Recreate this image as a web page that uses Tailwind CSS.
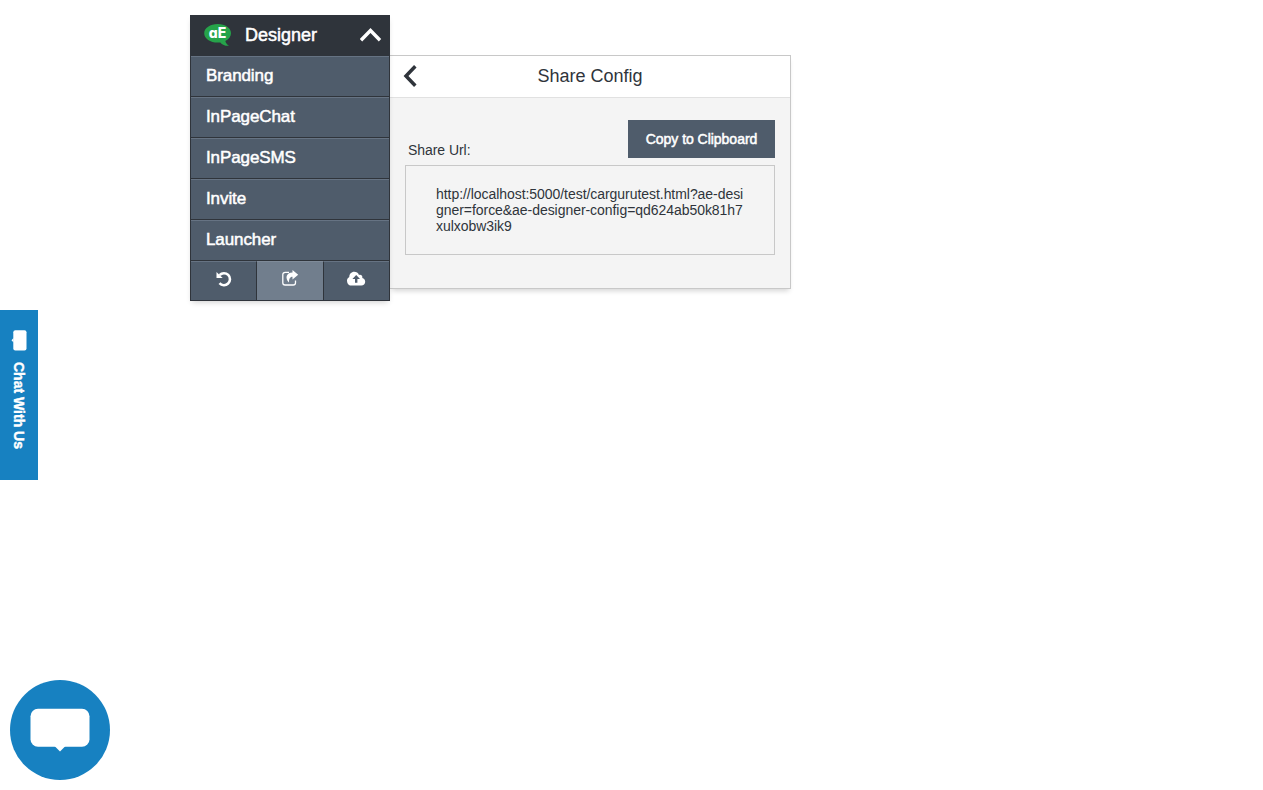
<!DOCTYPE html>
<html lang="en">
<head>
<meta charset="utf-8">
<title>Designer</title>
<script src="https://cdn.jsdelivr.net/npm/@tailwindcss/browser@4"></script>
</head>
<body class="relative h-[790px] overflow-hidden bg-white font-['Liberation_Sans',Arial,sans-serif] text-[#2f343b]">
<div class="flex items-start pl-[190px] pt-[15px]">
  <nav class="relative z-10 w-[200px] shrink-0 text-[17px] tracking-[-0.1px] text-white shadow-[0_3px_6px_-2px_rgba(0,0,0,0.2)] [-webkit-text-stroke:0.5px_white]">
    <header class="flex h-[41px] items-center bg-[#2f343b] pb-[2px] pl-[14px] pr-[8px] text-lg tracking-normal">
      <svg class="h-[24px] w-[28px] font-['Inter'] [-webkit-text-stroke:0] [font-feature-settings:'cv11','ss03']" viewBox="0 0 28 24">
        <path fill="#26a34a" d="M13.7 1C21.2 1 27 5.1 27 10.2C27 13.4 24.8 16.2 21.3 17.9C22 20.3 23.5 21.9 25 22.8C21.7 23.2 18.3 21.7 16.3 19.4L13.7 19.6C6.200 19.600 .200 15.500 .200 10.200C.200 5.100 6.200 1 13.700 1Z"/>
        <text x="4.800" y="15" fill="#fff" font-weight="800" font-size="14" textLength="17.500" lengthAdjust="spacingAndGlyphs">aE</text>
      </svg>
      <span class="ml-[13px] flex-1 leading-5">Designer</span>
      <svg class="h-[14px] w-[22px]" viewBox="0 0 22 14" fill="none" stroke="#fff" stroke-width="3.400"><path d="M1 12.200L10.500 2.500L20 12.200"/></svg>
    </header>
    <div class="border-x border-[#2f343b] bg-[#4f5c6b]">
      <div class="h-[41px] border-b border-t border-b-[#2f343b] border-t-[#667383] pl-[15px] leading-[38px]">Branding</div>
      <div class="h-[41px] border-b border-t border-b-[#2f343b] border-t-[#667383] pl-[15px] leading-[38px]">InPageChat</div>
      <div class="h-[41px] border-b border-t border-b-[#2f343b] border-t-[#667383] pl-[15px] leading-[38px]">InPageSMS</div>
      <div class="h-[41px] border-b border-t border-b-[#2f343b] border-t-[#667383] pl-[15px] leading-[38px]">Invite</div>
      <div class="h-[41px] border-b border-t border-b-[#2f343b] border-t-[#667383] pl-[15px] leading-[38px]">Launcher</div>
      <div class="flex h-[40px] border-b border-[#2f343b]">
        <div class="flex w-[66px] justify-center border-r border-t border-r-[#2f343b] border-t-[#667383] pt-[8px]">
          <svg class="h-[18px] w-[18px]" viewBox="0 0 18 18" fill="none"><path d="M4.600 5.100A6 6 0 1 1 4.500 13.200" stroke="#fff" stroke-width="2.600"/><path d="M1.500 2V8.100H7.700Z" fill="#fff"/></svg>
        </div>
        <div class="flex w-[67px] justify-center border-r border-t border-r-[#2f343b] border-t-[#7f8b99] bg-[#717e8d] pt-[7px]">
          <svg class="h-[18px] w-[18px]" viewBox="0 0 18 18" fill="none"><path d="M8 3.300H4.300A2.500 2.500 0 0 0 1.800 5.800V13.700A2.300 2.300 0 0 0 4.100 16H12.200A2.300 2.300 0 0 0 14.500 13.700V11.500" stroke="#fff" stroke-width="1.300"/><path d="M11.500 1L17.200 5.700L11.500 10.400V7.800C9.500 7.800 7.900 9.400 8 13.600C3.900 9.300 4.900 3.500 11.500 3.400Z" fill="#fff"/></svg>
        </div>
        <div class="flex flex-1 justify-center border-t border-[#667383] pt-[9px] pr-[1px]">
          <svg class="h-[16px] w-[20px]" viewBox="0 0 20 16"><path fill="#fff" d="M5.500 14.500A4.500 4.500 0 0 1 3.300 6.100C3.200 3.200 5.400 .800 8.200 .800C10.400 .800 12.200 2 13 4C15.200 3.300 16.900 5.200 16.300 7.100C18 7.500 19.200 9 19.200 10.700C19.200 12.800 17.500 14.500 15.400 14.500Z"/><path fill="#4f5c6b" d="M10.200 4L14 8H11.400V11.700H9V8H6.400Z"/></svg>
        </div>
      </div>
    </div>
  </nav>
  <section class="mt-[40px] h-[234px] w-[401px] border border-l-0 border-[#c8c8c8] bg-[#f4f4f4] shadow-[0_4px_5px_-2px_rgba(0,0,0,0.17)]">
    <header class="flex h-[42px] items-center border-b border-[#e1e1e1] bg-white pb-[2px] pl-[13px]">
      <svg class="h-[22px] w-[14px]" viewBox="0 0 14 22" fill="none" stroke="#2f343b" stroke-width="3.500"><path d="M12.300 1.300L3 11L12.300 20.700"/></svg>
      <h1 class="mr-[27px] flex-1 text-center text-lg leading-5">Share Config</h1>
    </header>
    <div class="px-[15px] pt-[22px]">
      <div class="flex h-[38px] items-end justify-between text-sm">
        <span class="pl-[3px] leading-4 tracking-[-0.05px]">Share Url:</span>
        <button class="h-[38px] w-[147px] bg-[#4f5c6b] tracking-[-0.03px] text-white [-webkit-text-stroke:0.5px_white]">Copy to Clipboard</button>
      </div>
      <div class="mt-[7px] h-[90px] border border-[#c8c8c8] px-[30px] pt-[20px] text-sm leading-4 tracking-[-0.05px] break-all">http://localhost:5000/test/cargurutest.html?ae-designer=force&amp;ae-designer-config=qd624ab50k81h7xulxobw3ik9</div>
    </div>
  </section>
</div>
<div class="absolute left-0 top-[310px] flex h-[170px] w-[38px] flex-col items-center bg-[#1781c1] pt-[20px] text-white">
  <svg class="h-[21px] w-[16px]" viewBox="0 0 16 21" fill="#fff"><rect x="2.300" y="0.300" width="13.200" height="20.200" rx="2"/><path d="M2.500 8L.500 10.300L2.500 12.500Z"/></svg>
  <span class="mt-[11px] text-sm leading-4 font-bold [writing-mode:vertical-rl] [-webkit-text-stroke:0.4px_white]">Chat With Us</span>
</div>
<div class="absolute left-[10px] top-[680px] flex h-[100px] w-[100px] items-center justify-center rounded-full bg-[#1781c1]">
  <svg class="h-[44px] w-[60px]" viewBox="0 0 60 44" fill="#fff"><rect x="0.500" y="0.700" width="59" height="38" rx="7.500"/><path d="M24.500 38H35.500L30 43.500Z"/></svg>
</div>
</body>
</html>
